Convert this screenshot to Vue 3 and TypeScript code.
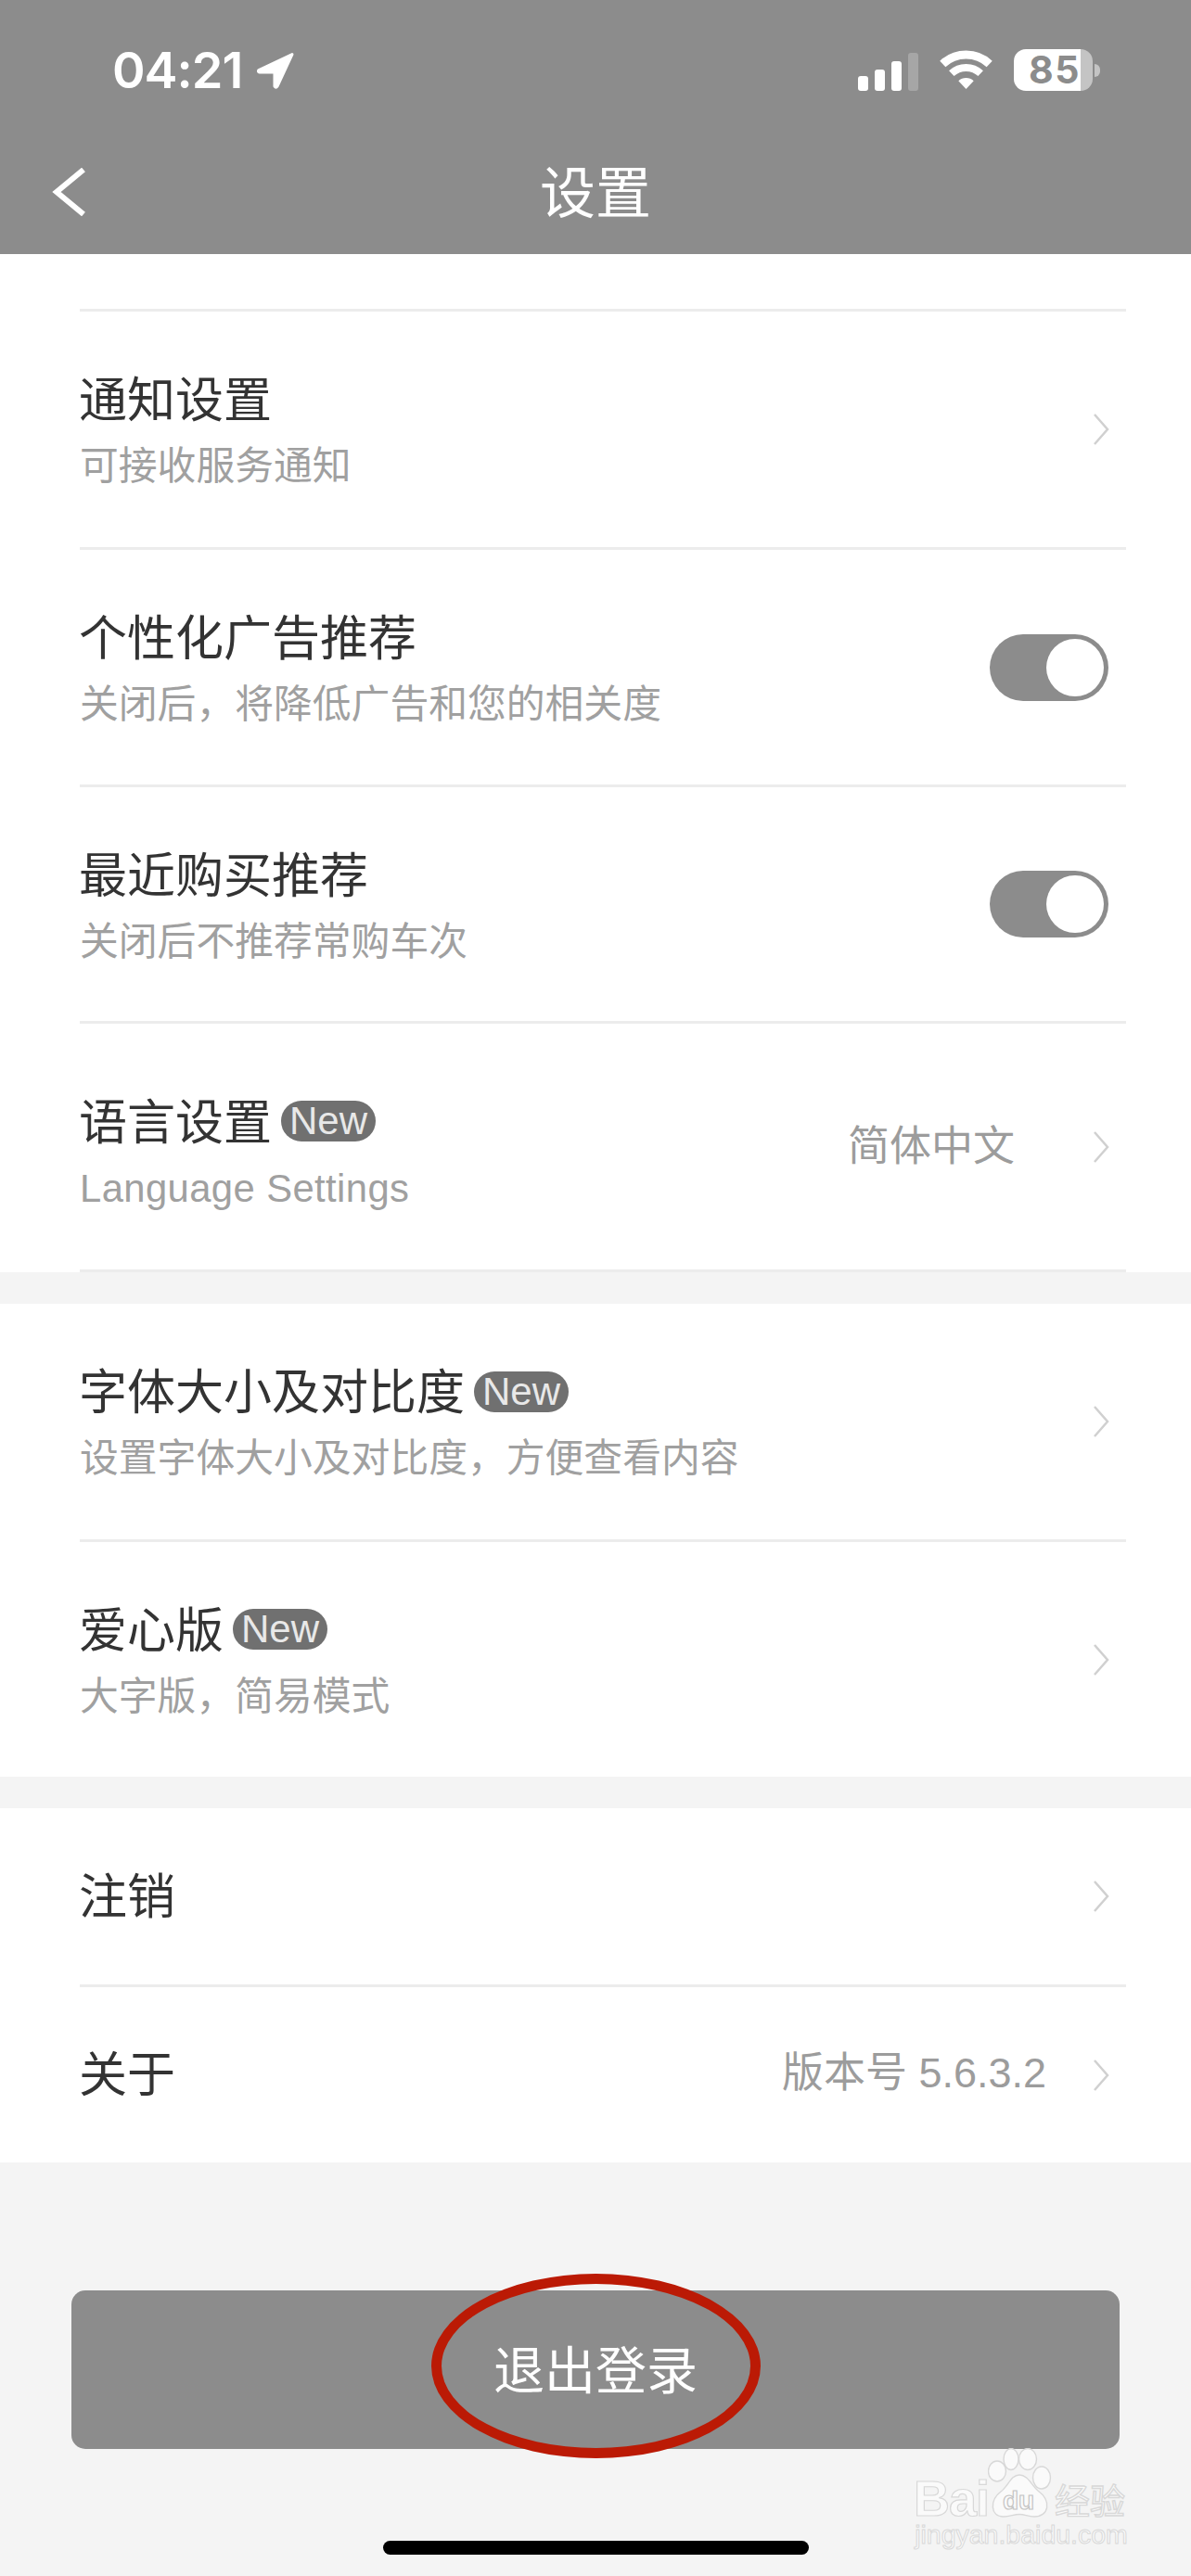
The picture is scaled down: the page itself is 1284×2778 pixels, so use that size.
<script setup lang="ts">
interface Row {
  title: string
  sub?: string
  badge?: boolean
  value?: string
  toggle?: boolean
  cls: string
}
const first: Row[] = [
  { title: '通知设置', sub: '可接收服务通知', cls: 'r257' },
  { title: '个性化广告推荐', sub: '关闭后\uFF0C将降低广告和您的相关度', toggle: true, cls: 'r256' },
  { title: '最近购买推荐', sub: '关闭后不推荐常购车次', toggle: true, cls: 'r255' },
  { title: '语言设置', sub: 'Language Settings', badge: true, value: '简体中文', cls: 'r268 lang' },
]
const second: Row[] = [
  { title: '字体大小及对比度', sub: '设置字体大小及对比度\uFF0C方便查看内容', badge: true, cls: 'r257' },
  { title: '爱心版', sub: '大字版\uFF0C简易模式', badge: true, cls: 'r253 last' },
]
const third: Row[] = [
  { title: '注销', cls: 'r193 plain' },
  { title: '关于', value: '版本号 5.6.3.2', cls: 'r189 last plain about' },
]
const groups: Row[][] = [second, third]
</script>

<template>
  <div class="page">
    <header class="head">
      <div class="status">
        <div class="time-wrap">
          <span class="time">04:21</span>
          <svg class="arrow" viewBox="0 0 42 40" width="42" height="40">
            <path d="M39 2.5 L3 19.5 Q1.5 21.5 4 22 L20 22 L20 37 Q21.5 39.5 23 37 Z" fill="#fff" stroke="#fff" stroke-width="3" stroke-linejoin="round" />
          </svg>
        </div>
        <div class="sys">
          <div class="signal">
            <i class="b1"></i><i class="b2"></i><i class="b3"></i><i class="b4"></i>
          </div>
          <svg class="wifi" viewBox="0 0 57 42" width="57" height="42">
            <path d="M3.3 14.95 A37 37 0 0 1 53.7 14.95" fill="none" stroke="#fff" stroke-width="9" />
            <path d="M12.8 25.2 A23 23 0 0 1 44.2 25.2" fill="none" stroke="#fff" stroke-width="8" />
            <path d="M28.5 42 L20.3 33.2 A12 12 0 0 1 36.7 33.2 Z" fill="#fff" />
          </svg>
          <div class="battery">
            <div class="cell"><span>85</span></div>
            <i class="nub"></i>
          </div>
        </div>
      </div>
      <div class="nav">
        <svg class="back" viewBox="0 0 36 52" width="36" height="52">
          <path d="M34 2 L5 26 L34 50" fill="none" stroke="#fff" stroke-width="6" />
        </svg>
        <span class="title">设置</span>
      </div>
    </header>

    <section class="card">
      <div class="lead"></div>
      <div v-for="r in first" :key="r.title" class="row" :class="r.cls">
        <div class="text">
          <div class="name">{{ r.title }}<em v-if="r.badge" class="badge">New</em></div>
          <div v-if="r.sub" class="sub">{{ r.sub }}</div>
        </div>
        <div v-if="r.toggle" class="toggle"><i></i></div>
        <template v-else>
          <span v-if="r.value" class="value">{{ r.value }}</span>
          <svg class="chev" viewBox="0 0 18 34" width="18" height="34">
            <path d="M2 1 L16 17 L2 33" fill="none" stroke="#d0d0d0" stroke-width="2.5" />
          </svg>
        </template>
      </div>
    </section>

    <section v-for="(g, i) in groups" :key="i" class="card spaced">
      <div v-for="r in g" :key="r.title" class="row" :class="r.cls">
        <div class="text">
          <div class="name">{{ r.title }}<em v-if="r.badge" class="badge">New</em></div>
          <div v-if="r.sub" class="sub">{{ r.sub }}</div>
        </div>
        <span v-if="r.value" class="value">{{ r.value }}</span>
        <svg class="chev" viewBox="0 0 18 34" width="18" height="34">
          <path d="M2 1 L16 17 L2 33" fill="none" stroke="#d0d0d0" stroke-width="2.5" />
        </svg>
      </div>
    </section>

    <div class="logout">退出登录</div>
    <div class="home"></div>

    <div class="ring"></div>
    <div class="mark">
      <div class="logo">
        <span class="bai">Bai</span>
        <svg class="paw" viewBox="0 0 72 76" width="72" height="76">
          <g fill="#fafafa" stroke="#d8d8d8" stroke-width="1.4">
            <ellipse cx="10" cy="25" rx="9.5" ry="11" />
            <ellipse cx="25" cy="12" rx="8" ry="11.5" />
            <ellipse cx="43" cy="12" rx="9.5" ry="11.5" />
            <ellipse cx="58" cy="32" rx="9.5" ry="12" />
            <path d="M34 29 C43 29 47 40 54 46 C69 57 66 74 50 74 C43 74 40 71.5 34 71.5 C28 71.5 24 74 17 74 C2 74 2 56 14 47 C22 41 25 29 34 29 Z" />
          </g>
          <text x="33" y="66" text-anchor="middle" class="du">du</text>
        </svg>
        <span class="jy">经验</span>
      </div>
      <div class="url">jingyan.baidu.com</div>
    </div>
  </div>
</template>

<style scoped>
.page {
  position: relative;
  width: 1284px;
  height: 2778px;
  overflow: hidden;
  background: #f4f4f4;
  font-family: "Liberation Sans", "Noto Sans CJK SC", sans-serif;
  color: #333;
}
.head {
  height: 274px;
  background: #8c8c8c;
  color: #fff;
}
.status {
  height: 146px;
  box-sizing: border-box;
  padding: 53px 98px 0 121px;
  display: flex;
  justify-content: space-between;
  align-items: flex-start;
}
.time-wrap {
  display: flex;
  align-items: center;
  gap: 15px;
  height: 46px;
}
.time {
  font: 600 54px/46px Inter, sans-serif;
  letter-spacing: -1px;
}
.sys {
  display: flex;
  align-items: flex-end;
  height: 45px;
  gap: 23px;
}
.signal {
  display: flex;
  align-items: flex-end;
  gap: 7px;
  height: 43px;
}
.signal i {
  display: block;
  width: 11px;
  border-radius: 3px;
  background: #fff;
}
.signal .b1 { height: 16px; }
.signal .b2 { height: 23px; }
.signal .b3 { height: 32px; }
.signal .b4 { height: 41px; background: #a6a6a6; }
.wifi {
  display: block;
  margin-bottom: 2px;
}
.battery {
  display: flex;
  align-items: center;
  gap: 2px;
}
.cell {
  width: 85px;
  height: 45px;
  border-radius: 13px;
  background: linear-gradient(90deg, #fff 0 72px, #c4c4c4 72px);
  display: flex;
  align-items: center;
  padding-left: 16px;
  box-sizing: border-box;
  color: #8c8c8c;
}
.cell span {
  font: 700 41px/45px Inter, sans-serif;
  letter-spacing: 1.5px;
}
.nub {
  display: block;
  width: 6px;
  height: 14px;
  border-radius: 0 7px 7px 0;
  background: #c4c4c4;
}
.nav {
  position: relative;
  height: 128px;
  display: flex;
  align-items: flex-start;
  justify-content: center;
}
.back {
  position: absolute;
  left: 56px;
  top: 35px;
}
.title {
  font-size: 60px;
  line-height: 62px;
  margin-top: 27px;
  font-family: "Noto Sans CJK SC", sans-serif;
}
.card {
  background: #fff;
  padding: 0 70px 0 86px;
}
.spaced {
  margin-top: 34px;
}
.lead {
  height: 59px;
  border-bottom: 3px solid #ececec;
}
.row {
  display: flex;
  align-items: center;
  box-sizing: border-box;
  border-bottom: 3px solid #ececec;
}
.row.last { border-bottom: 0; }
.r257 { height: 257px; }
.r256 { height: 256px; }
.r255 { height: 255px; }
.r253 { height: 253px; }
.r268 { height: 268px; }
.r193 { height: 193px; }
.r189 { height: 189px; }
.text {
  flex: 1;
  min-width: 0;
  padding-top: 2px;
}
.r255 .text { padding-top: 4px; }
.lang .text { padding-top: 12px; }
.lang .sub { letter-spacing: 0.4px; }
.plain .text { padding: 0 0 7px; }
.name {
  font-size: 52px;
  line-height: 76px;
  color: #333;
  font-family: "Noto Sans CJK SC", sans-serif;
  display: flex;
  align-items: center;
  margin-left: -1px;
}
.sub {
  margin-top: 2px;
  font-size: 41.8px;
  line-height: 70px;
  color: #a0a0a0;
}
.badge {
  margin-left: 10px;
  margin-top: 5px;
  width: 102px;
  height: 44px;
  border-radius: 22px;
  background: #707070;
  color: #e8e8e8;
  font: normal 42px/44px "Liberation Sans", sans-serif;
  text-align: center;
}
.value {
  font-size: 45px;
  line-height: 60px;
  color: #9c9c9c;
  margin-right: 84px;
}
.about .value {
  margin-right: 50px;
  margin-bottom: 3px;
}
.chev {
  display: block;
  margin-right: 18px;
  flex: none;
}
.toggle {
  width: 128px;
  height: 72px;
  border-radius: 36px;
  background: #8c8c8c;
  margin-right: 19px;
  display: flex;
  align-items: center;
  justify-content: flex-end;
  padding-right: 5px;
  box-sizing: border-box;
}
.toggle i {
  display: block;
  width: 62px;
  height: 62px;
  border-radius: 50%;
  background: #fff;
}
.logout {
  width: 1130px;
  height: 171px;
  margin: 138px 0 0 77px;
  border-radius: 15px;
  background: #8c8c8c;
  color: #fff;
  font-size: 55px;
  line-height: 165px;
  text-align: center;
  font-family: "Noto Sans CJK SC", sans-serif;
}
.home {
  width: 459px;
  height: 15px;
  margin: 99px 0 0 413px;
  border-radius: 8px;
  background: #000;
}
.ring {
  position: absolute;
  left: 465px;
  top: 2452px;
  width: 355px;
  height: 199px;
  box-sizing: border-box;
  border: 11px solid #bb1a05;
  border-radius: 50%;
}
.mark {
  position: absolute;
  left: 985px;
  top: 2640px;
  width: 232px;
  color: #fafafa;
}
.logo {
  display: flex;
  align-items: flex-end;
  height: 76px;
}
.bai {
  font: 700 54px/50px "Liberation Sans", sans-serif;
  -webkit-text-stroke: 1.2px #d8d8d8;
  letter-spacing: -1px;
  width: 80px;
  flex: none;
  margin-bottom: -3px;
}
.paw {
  display: block;
  flex: none;
}
.du {
  font: 700 28px "Liberation Sans", sans-serif;
  fill: #fafafa;
  stroke: #c4c4c4;
  stroke-width: 1.2;
}
.jy {
  font: 400 38px/42px "Noto Sans CJK SC", sans-serif;
  -webkit-text-stroke: 1.4px #d8d8d8;
  white-space: nowrap;
}
.url {
  font-size: 28.5px;
  line-height: 34px;
  white-space: nowrap;
  -webkit-text-stroke: 1px #d8d8d8;
  text-align: center;
}
</style>
